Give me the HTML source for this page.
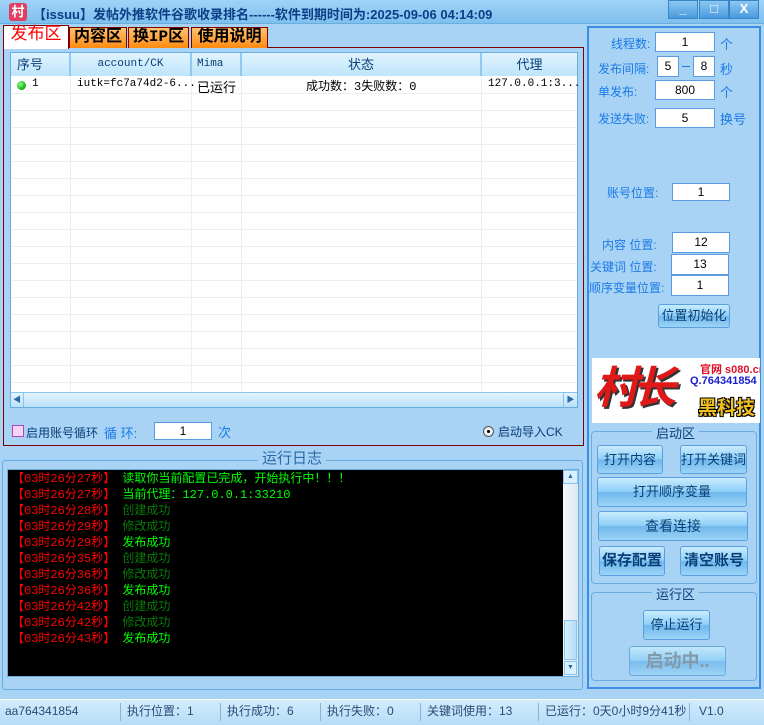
<!DOCTYPE html>
<html><head><meta charset="utf-8"><style>
*{margin:0;padding:0;box-sizing:border-box}
body{width:764px;height:725px;overflow:hidden;background:#a9d3f4;font-family:"Liberation Sans","Noto Sans CJK SC",sans-serif;font-size:12px;position:relative;color:#0a3e78}
.a{position:absolute;white-space:nowrap}
.tb{left:0;top:0;width:764px;height:24px;background:linear-gradient(#9fd3f7,#7fc0ee);border-bottom:1px solid #6aaee0}
.wb{top:0;height:19px;width:30px;background:linear-gradient(#8cc8f0,#4a9ae0);border:1px solid #3a84c8;color:#fff;font-weight:bold;text-align:center;font-size:13px;line-height:16px}
.tab{top:27px;height:21px;border:1px solid #800000;border-bottom:none;background:linear-gradient(#ffc270,#ff8a10);font-size:16px;font-weight:bold;color:#000;line-height:19px;text-align:center;font-family:"Liberation Mono","Noto Sans CJK SC",monospace}
.inp{background:#fff;border:1px solid #5a9ae0;text-align:center;color:#000;font-size:12px}
.lb{color:#1a7ae6;font-size:12px}
.btn{border:1px solid #5aa0e0;border-radius:3px;background:linear-gradient(#c8ecfc 0%,#8fd0f8 48%,#6fb8ec 52%,#9cd4f6 100%);text-align:center;color:#0a3e78;font-size:13px}
.hd{top:53px;height:23px;background:linear-gradient(#e0f4fe,#bfe4fa);border-right:2px solid #8fc8f0;text-align:center;line-height:23px;color:#0a3e78;font-size:12px}
.ln{left:0;width:100%;height:1px;background:#eee}
.vl{top:77px;width:1px;height:314px;background:#eee}
.log div{height:16px;line-height:16px;white-space:pre}
.r{color:#f00}.g{color:#0f0}.d{color:#0a7a0a}
.sb{top:700px;height:25px;background:linear-gradient(#d4ecfc,#b6dcf6);line-height:22px;color:#2a4a78;font-size:12px}
.sep{top:703px;width:1px;height:18px;background:#8ab4d8}
</style></head><body>
<div class="a tb"></div>
<div class="a" style="left:9px;top:3px;width:18px;height:18px;background:#e04060;border-radius:3px;color:#fff;font-weight:bold;font-size:13px;text-align:center;line-height:18px">村</div>
<div class="a" style="left:33px;top:4px;font-size:13px;font-weight:bold;color:#0c3e86">【issuu】发帖外推软件谷歌收录排名------软件到期时间为:2025-09-06 04:14:09</div>
<div class="a wb" style="left:668px">_</div>
<div class="a wb" style="left:699px">□</div>
<div class="a wb" style="left:729px">X</div>

<div class="a tab" style="left:3px;top:25px;height:24px;width:66px;background:#fff;color:#f00;font-weight:normal;font-size:17px">发布区</div>
<div class="a tab" style="left:69px;width:58px">内容区</div>
<div class="a tab" style="left:128px;width:61px">换IP区</div>
<div class="a tab" style="left:191px;width:77px">使用说明</div>
<div class="a" style="left:3px;top:47px;width:581px;height:399px;border:1px solid #800000;border-top:none"></div>
<div class="a" style="left:268px;top:47px;width:316px;height:1px;background:#800000"></div>
<div class="a" style="left:10px;top:52px;width:568px;height:356px;background:#fff;border:1px solid #6aaee0;overflow:hidden">
<div style="position:relative;width:100%;height:100%">
<div class="ln" style="top:40px;position:absolute"></div><div class="ln" style="top:57px;position:absolute"></div><div class="ln" style="top:74px;position:absolute"></div><div class="ln" style="top:91px;position:absolute"></div><div class="ln" style="top:108px;position:absolute"></div><div class="ln" style="top:125px;position:absolute"></div><div class="ln" style="top:142px;position:absolute"></div><div class="ln" style="top:159px;position:absolute"></div><div class="ln" style="top:176px;position:absolute"></div><div class="ln" style="top:193px;position:absolute"></div><div class="ln" style="top:210px;position:absolute"></div><div class="ln" style="top:227px;position:absolute"></div><div class="ln" style="top:244px;position:absolute"></div><div class="ln" style="top:261px;position:absolute"></div><div class="ln" style="top:278px;position:absolute"></div><div class="ln" style="top:295px;position:absolute"></div><div class="ln" style="top:312px;position:absolute"></div><div class="ln" style="top:329px;position:absolute"></div>
</div></div>
<div class="a vl" style="left:70px"></div><div class="a vl" style="left:191px"></div><div class="a vl" style="left:241px"></div><div class="a vl" style="left:481px"></div>
<div class="a hd" style="left:11px;width:60px;text-align:left;padding-left:6px;font-size:13px">序号</div>
<div class="a hd" style="left:71px;width:121px;font-family:'Liberation Mono',monospace;font-size:11px">account/CK</div>
<div class="a hd" style="left:192px;width:50px;text-align:left;padding-left:5px;font-family:'Liberation Mono',monospace;font-size:11px">Mima</div>
<div class="a hd" style="left:242px;width:240px;font-size:13px">状态</div>
<div class="a hd" style="left:482px;width:95px;border-right:none;font-size:13px">代理</div>
<div class="a" style="left:17px;top:81px;width:9px;height:9px;border-radius:50%;background:radial-gradient(circle at 35% 35%,#8f8,#1a1 70%)"></div>
<div class="a" style="left:32px;top:78px;color:#000;font-family:'Liberation Mono',monospace;font-size:11px">1</div>
<div class="a" style="left:77px;top:78px;color:#000;font-family:'Liberation Mono',monospace;font-size:11px">iutk=fc7a74d2-6...</div>
<div class="a" style="left:197px;top:77px;color:#000;font-size:13px">已运行</div>
<div class="a" style="left:306px;top:77px;color:#000;font-family:'Liberation Mono','Noto Sans CJK SC',monospace;font-size:12px">成功数：3失败数：0</div>
<div class="a" style="left:488px;top:78px;color:#000;font-family:'Liberation Mono',monospace;font-size:11px">127.0.0.1:3...</div>
<div class="a" style="left:11px;top:392px;width:566px;height:15px;background:linear-gradient(#e4f4fe,#b8e0f8);border-top:1px solid #8ac4ee"></div>
<div class="a" style="left:11px;top:392px;width:13px;height:15px;border-right:1px solid #8ac4ee;color:#2a6aa8;font-size:8px;line-height:15px;text-align:center">◀</div>
<div class="a" style="left:563px;top:392px;width:14px;height:15px;border-left:1px solid #8ac4ee;color:#2a6aa8;font-size:8px;line-height:15px;text-align:center">▶</div>

<div class="a" style="left:12px;top:425px;width:12px;height:12px;border:1px solid #b04ab0;background:#f4d4f4"></div>
<div class="a" style="left:26px;top:424px;color:#0a3e78;font-size:12px">启用账号循环</div>
<div class="a lb" style="left:104px;top:423px;font-size:13px">循 环:</div>
<div class="a inp" style="left:154px;top:422px;width:58px;height:18px;line-height:16px">1</div>
<div class="a lb" style="left:218px;top:422px;font-size:13px">次</div>
<div class="a" style="left:483px;top:426px;width:11px;height:11px;border-radius:50%;border:1px solid #555;background:#eee"><div style="margin:3px;width:3px;height:3px;background:#000;border-radius:50%"></div></div>
<div class="a" style="left:498px;top:423px;color:#0a3e78;font-size:12px">启动导入CK</div>

<div class="a" style="left:2px;top:460px;width:581px;height:230px;border:1px solid #6aaee0;border-radius:3px"></div>
<div class="a" style="left:258px;top:447px;padding:0 4px;background:#a9d3f4;font-size:15px;color:#2a6aa8">运行日志</div>
<div class="a log" style="left:7px;top:469px;width:572px;height:208px;background:#000;border:1px solid #6aaee0;padding:1px 0 0 4px;font-family:'Liberation Mono','Noto Sans CJK SC',monospace;font-size:12px">
<div><span class="r">【03时26分27秒】</span> <span class="g">读取你当前配置已完成，开始执行中！！！</span></div>
<div><span class="r">【03时26分27秒】</span> <span class="g">当前代理：127.0.0.1:33210</span></div>
<div><span class="r">【03时26分28秒】</span> <span class="d">创建成功</span></div>
<div><span class="r">【03时26分29秒】</span> <span class="d">修改成功</span></div>
<div><span class="r">【03时26分29秒】</span> <span class="g">发布成功</span></div>
<div><span class="r">【03时26分35秒】</span> <span class="d">创建成功</span></div>
<div><span class="r">【03时26分36秒】</span> <span class="d">修改成功</span></div>
<div><span class="r">【03时26分36秒】</span> <span class="g">发布成功</span></div>
<div><span class="r">【03时26分42秒】</span> <span class="d">创建成功</span></div>
<div><span class="r">【03时26分42秒】</span> <span class="d">修改成功</span></div>
<div><span class="r">【03时26分43秒】</span> <span class="g">发布成功</span></div>
</div>
<div class="a" style="left:563px;top:470px;width:15px;height:206px;background:linear-gradient(90deg,#f4f8fc,#dde8f0)"></div>
<div class="a" style="left:564px;top:620px;width:13px;height:40px;background:linear-gradient(90deg,#d8f0fe,#b4dcf6);border:1px solid #8ac4ee"></div>
<div class="a" style="left:564px;top:661px;width:13px;height:14px;background:#d8f0fe;border:1px solid #8ac4ee;font-size:7px;text-align:center;line-height:12px;color:#2a6aa8">▼</div>
<div class="a" style="left:563px;top:470px;width:15px;height:14px;background:#d8f0fe;border:1px solid #8ac4ee;font-size:7px;text-align:center;line-height:12px;color:#2a6aa8">▲</div>

<div class="a" style="left:587px;top:26px;width:174px;height:663px;border:2px solid #3a8ee6"></div>
<div class="a lb" style="left:611px;top:35px">线程数:</div>
<div class="a inp" style="left:655px;top:32px;width:60px;height:20px;line-height:18px">1</div>
<div class="a lb" style="left:720px;top:34px;font-size:13px">个</div>
<div class="a lb" style="left:598px;top:60px">发布间隔:</div>
<div class="a inp" style="left:657px;top:56px;width:22px;height:21px;line-height:19px">5</div>
<div class="a" style="left:682px;top:66px;width:8px;height:1px;background:#1a7ae6"></div>
<div class="a inp" style="left:693px;top:56px;width:22px;height:21px;line-height:19px">8</div>
<div class="a lb" style="left:720px;top:59px;font-size:13px">秒</div>
<div class="a lb" style="left:598px;top:83px">单发布:</div>
<div class="a inp" style="left:655px;top:80px;width:60px;height:20px;line-height:18px">800</div>
<div class="a lb" style="left:720px;top:82px;font-size:13px">个</div>
<div class="a lb" style="left:598px;top:110px">发送失败:</div>
<div class="a inp" style="left:655px;top:108px;width:60px;height:20px;line-height:18px">5</div>
<div class="a lb" style="left:720px;top:109px;font-size:13px">换号</div>
<div class="a lb" style="left:607px;top:184px">账号位置:</div>
<div class="a inp" style="left:672px;top:183px;width:58px;height:18px;line-height:16px">1</div>
<div class="a lb" style="left:602px;top:236px">内容 位置:</div>
<div class="a inp" style="left:672px;top:232px;width:58px;height:21px;line-height:19px">12</div>
<div class="a lb" style="left:590px;top:258px">关键词 位置:</div>
<div class="a inp" style="left:671px;top:254px;width:58px;height:21px;line-height:19px">13</div>
<div class="a lb" style="left:589px;top:279px">顺序变量位置:</div>
<div class="a inp" style="left:671px;top:275px;width:58px;height:21px;line-height:19px">1</div>
<div class="a btn" style="left:658px;top:304px;width:72px;height:24px;line-height:22px;font-size:13px">位置初始化</div>

<div class="a" style="left:592px;top:358px;width:168px;height:65px;background:#fff;overflow:hidden">
<div style="position:absolute;left:2px;top:0px;font-size:44px;font-weight:bold;color:#e01818;font-style:italic;letter-spacing:-6px;text-shadow:2px 2px 0 #333;line-height:62px">村长</div>
<div style="position:absolute;left:108px;top:3px;font-size:11px;font-weight:bold;color:#e0102a;white-space:nowrap">官网 s080.cn</div>
<div style="position:absolute;left:98px;top:17px;font-size:11px;font-weight:bold;color:#1a20d0;white-space:nowrap">Q.764341854</div>
<div style="position:absolute;left:106px;top:35px;font-size:19px;font-weight:bold;color:#f0c020;white-space:nowrap;text-shadow:1px 1px 0 #000,-1px -1px 0 #000,1px -1px 0 #000,-1px 1px 0 #000">黑科技</div>
</div>

<div class="a" style="left:591px;top:431px;width:166px;height:153px;border:1px solid #6aaee0;border-radius:4px"></div>
<div class="a" style="left:652px;top:423px;padding:0 4px;background:#a9d3f4;color:#0a3e78;font-size:13px">启动区</div>
<div class="a btn" style="left:597px;top:445px;width:66px;height:29px;line-height:27px">打开内容</div>
<div class="a btn" style="left:680px;top:445px;width:67px;height:29px;line-height:27px">打开关键词</div>
<div class="a btn" style="left:597px;top:477px;width:150px;height:30px;line-height:28px">打开顺序变量</div>
<div class="a btn" style="left:598px;top:511px;width:150px;height:30px;line-height:28px;font-size:14px">查看连接</div>
<div class="a btn" style="left:599px;top:546px;width:66px;height:30px;line-height:28px;font-size:15px;font-weight:bold">保存配置</div>
<div class="a btn" style="left:680px;top:546px;width:68px;height:30px;line-height:28px;font-size:15px;font-weight:bold">清空账号</div>
<div class="a" style="left:591px;top:592px;width:166px;height:89px;border:1px solid #6aaee0;border-radius:4px"></div>
<div class="a" style="left:652px;top:584px;padding:0 4px;background:#a9d3f4;color:#0a3e78;font-size:13px">运行区</div>
<div class="a btn" style="left:643px;top:610px;width:67px;height:30px;line-height:28px">停止运行</div>
<div class="a btn" style="left:629px;top:646px;width:97px;height:30px;line-height:28px;font-size:18px;font-weight:bold;color:#7a8a96;opacity:.8">启动中..</div>

<div class="a" style="left:0;top:699px;width:764px;height:1px;background:#fff"></div>
<div class="a sb" style="left:0;width:764px"></div>
<div class="a sb" style="left:5px;background:none">aa764341854</div>
<div class="a sep" style="left:120px"></div>
<div class="a sb" style="left:127px;background:none">执行位置：1</div>
<div class="a sep" style="left:220px"></div>
<div class="a sb" style="left:227px;background:none">执行成功：6</div>
<div class="a sep" style="left:320px"></div>
<div class="a sb" style="left:327px;background:none">执行失败：0</div>
<div class="a sep" style="left:420px"></div>
<div class="a sb" style="left:427px;background:none">关键词使用：13</div>
<div class="a sep" style="left:538px"></div>
<div class="a sb" style="left:545px;background:none">已运行：0天0小时9分41秒</div>
<div class="a sep" style="left:689px"></div>
<div class="a sb" style="left:699px;background:none">V1.0</div>
</body></html>
